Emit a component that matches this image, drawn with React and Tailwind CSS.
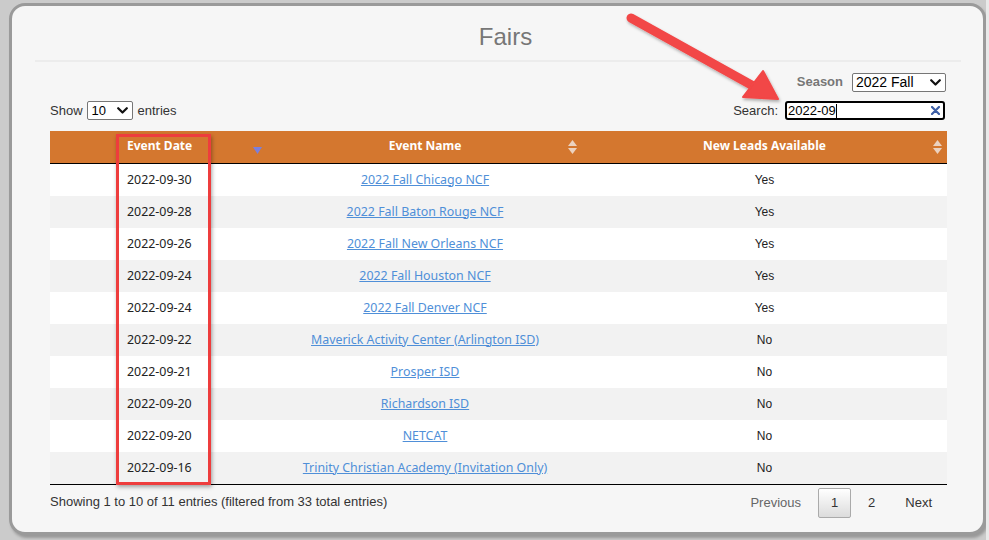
import React from "react";

const rows = [
  ["2022-09-30", "2022 Fall Chicago NCF", "Yes"],
  ["2022-09-28", "2022 Fall Baton Rouge NCF", "Yes"],
  ["2022-09-26", "2022 Fall New Orleans NCF", "Yes"],
  ["2022-09-24", "2022 Fall Houston NCF", "Yes"],
  ["2022-09-24", "2022 Fall Denver NCF", "Yes"],
  ["2022-09-22", "Maverick Activity Center (Arlington ISD)", "No"],
  ["2022-09-21", "Prosper ISD", "No"],
  ["2022-09-20", "Richardson ISD", "No"],
  ["2022-09-20", "NETCAT", "No"],
  ["2022-09-16", "Trinity Christian Academy (Invitation Only)", "No"],
];

const arial = { fontFamily: '"Liberation Sans", Arial, sans-serif' };
const noto = { fontFamily: '"Noto Sans", "DejaVu Sans", sans-serif' };

function SortBoth() {
  return (
    <svg width="9" height="14" viewBox="0 0 9 14" className="shrink-0">
      <path d="M4.5 0 L9 6 L0 6 Z" fill="#ecd2bf" />
      <path d="M0 8 L9 8 L4.5 14 Z" fill="#ecd2bf" />
    </svg>
  );
}

function SortDesc() {
  return (
    <svg width="9" height="7" viewBox="0 0 9 7" className="shrink-0 mt-[8px]">
      <path d="M0 0 L9 0 L4.5 7 Z" fill="#7b7fdc" />
    </svg>
  );
}

function Chevron() {
  return (
    <svg width="11" height="7" viewBox="0 0 11 7">
      <path d="M1.2 1.2 L5.5 5.5 L9.8 1.2" fill="none" stroke="#111" strokeWidth="2.2" strokeLinecap="round" strokeLinejoin="round" />
    </svg>
  );
}

export default function App() {
  return (
    <div className="relative w-[989px] h-[540px] overflow-hidden bg-[#cbcbcb]">
      <div className="absolute left-[986px] top-0 w-[3px] h-[540px] bg-[#e9e9e9]" />
      <div className="ml-[9px] mt-[3px] w-[977px] h-[532px] rounded-[16px] border-[3px] border-[#9a9a9a] bg-[#f6f6f6] shadow-[2px_3px_3px_rgba(0,0,0,0.25)] flex flex-col">
        {/* Title */}
        <div
          className="mt-[17px] h-[28px] leading-[28px] text-[24px] text-[#777] text-center pl-[16px]"
          style={arial}
        >
          Fairs
        </div>
        <div className="mt-[9px] ml-[23px] mr-[22px] h-[2px] bg-[#ececec]" />

        <div className="ml-[38px] w-[897px] flex flex-col">
          {/* Season */}
          <div className="mt-[11px] h-[18px] flex justify-end items-center pr-[1px]">
            <span className="text-[13px] font-bold text-[#777] mr-[9px]" style={arial}>
              Season
            </span>
            <div className="w-[94px] h-[19px] border border-[#767676] rounded-[2px] bg-white flex items-center justify-between pl-[3px] pr-[4px]">
              <span className="text-[14px] text-black leading-none" style={arial}>
                2022 Fall
              </span>
              <Chevron />
            </div>
          </div>

          {/* Show / Search */}
          <div className="mt-[10px] h-[19px] flex justify-between items-center">
            <div className="flex items-center text-[13px] text-[#333]" style={arial}>
              <span>Show</span>
              <div className="ml-[4px] w-[46px] h-[19px] border border-[#767676] rounded-[2px] bg-white flex items-center justify-between pl-[4px] pr-[4px]">
                <span className="text-[13px] text-black leading-none">10</span>
                <Chevron />
              </div>
              <span className="ml-[5px]">entries</span>
            </div>
            <div className="flex items-center pr-[2px]">
              <span className="text-[13px] text-[#333] mr-[7px]" style={arial}>
                Search:
              </span>
              <div className="w-[160px] h-[19px] border-2 border-black rounded-[3px] bg-white flex items-center justify-between pl-[1px] pr-[3px]">
                <div className="flex items-center">
                  <span className="text-[13px] text-black leading-none" style={arial}>
                    2022-09
                  </span>
                  <span className="w-px h-[14px] bg-black" />
                </div>
                <svg width="9" height="9" viewBox="0 0 9 9">
                  <path d="M1 1 L8 8 M8 1 L1 8" stroke="#3d5fa6" strokeWidth="2.2" strokeLinecap="round" />
                </svg>
              </div>
            </div>
          </div>

          {/* Table */}
          <div className="mt-[11px] w-[897px]" style={noto}>
            <div className="h-[33px] pb-[2px] bg-[#d4772f] border-b border-black flex text-white font-bold text-[12px]">
              <div className="w-[218px] flex items-center justify-between pl-[77px] pr-[6px]">
                <span>Event Date</span>
                <SortDesc />
              </div>
              <div className="w-[314px] relative flex items-center justify-center">
                <span>Event Name</span>
                <div className="absolute right-[5px] top-[9px]">
                  <SortBoth />
                </div>
              </div>
              <div className="flex-1 relative flex items-center justify-center">
                <span>New Leads Available</span>
                <div className="absolute right-[5px] top-[9px]">
                  <SortBoth />
                </div>
              </div>
            </div>
            {rows.map((r, i) => (
              <div
                key={i}
                className={`h-[32px] flex items-center text-[12.4px] ${i % 2 === 0 ? "bg-white" : "bg-[#f2f2f2]"}`}
              >
                <div className="w-[218px] pl-[77px] text-[#222]">{r[0]}</div>
                <div className="w-[314px] text-center">
                  <a href="#" className="text-[#4f8fd8] underline">
                    {r[1]}
                  </a>
                </div>
                <div className="flex-1 text-center text-[#222] text-[12px]" style={arial}>
                  {r[2]}
                </div>
              </div>
            ))}
            <div className="h-px bg-black" />
          </div>

          {/* Footer */}
          <div className="mt-[2px] flex justify-between items-start" style={arial}>
            <span className="pt-[5px] text-[13px] text-[#333]">
              Showing 1 to 10 of 11 entries (filtered from 33 total entries)
            </span>
            <div className="flex items-center text-[13px] text-[#333] pr-[2px]">
              <span className="mr-[4px] px-[13px] py-[6px] text-[#666]">Previous</span>
              <span className="w-[33px] h-[30px] flex items-center justify-center border border-[#aaa] rounded-[2px] bg-gradient-to-b from-white to-[#dcdcdc] text-[#333]">
                1
              </span>
              <span className="ml-[4px] px-[13px] py-[6px]">2</span>
              <span className="ml-[4px] px-[13px] py-[6px]">Next</span>
            </div>
          </div>
        </div>
      </div>

      {/* Red highlight box */}
      <div className="absolute left-[116px] top-[134px] w-[95px] h-[351px] border-[3px] border-[#ee3d3d] shadow-[1px_2px_4px_rgba(0,0,0,0.35)] pointer-events-none" />

      {/* Red arrow */}
      <svg className="absolute left-0 top-0 pointer-events-none" width="989" height="540" viewBox="0 0 989 540">
        <defs>
          <filter id="sh" x="-10%" y="-10%" width="130%" height="130%">
            <feDropShadow dx="1" dy="2" stdDeviation="1.5" floodColor="#000" floodOpacity="0.3" />
          </filter>
        </defs>
        <g filter="url(#sh)">
          <line x1="631" y1="18" x2="755" y2="87" stroke="#f24646" strokeWidth="9" strokeLinecap="round" />
          <path d="M778 99 L743 97 L763 71 Z" fill="#f24646" stroke="#f24646" strokeWidth="2" strokeLinejoin="round" />
        </g>
      </svg>
    </div>
  );
}
